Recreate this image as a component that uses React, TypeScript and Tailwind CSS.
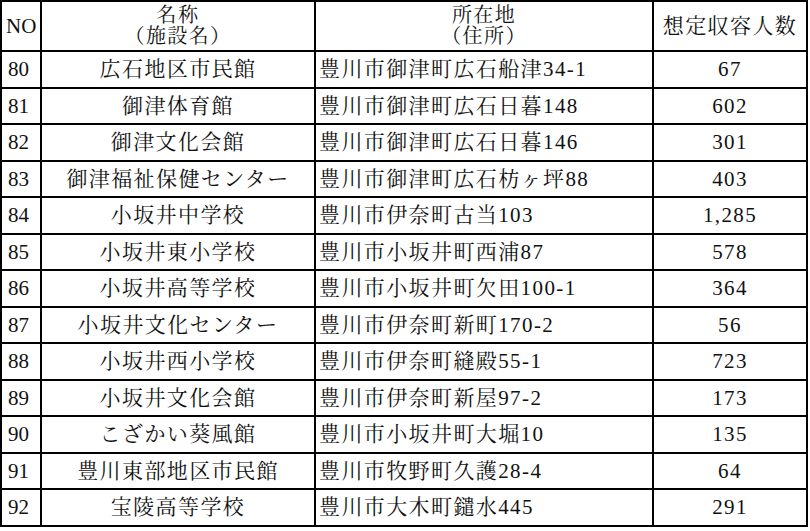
import React from 'react';

const rows = [
  ['80', '広石地区市民館', '豊川市御津町広石船津34-1', '67'],
  ['81', '御津体育館', '豊川市御津町広石日暮148', '602'],
  ['82', '御津文化会館', '豊川市御津町広石日暮146', '301'],
  ['83', '御津福祉保健センター', '豊川市御津町広石枋ヶ坪88', '403'],
  ['84', '小坂井中学校', '豊川市伊奈町古当103', '1,285'],
  ['85', '小坂井東小学校', '豊川市小坂井町西浦87', '578'],
  ['86', '小坂井高等学校', '豊川市小坂井町欠田100-1', '364'],
  ['87', '小坂井文化センター', '豊川市伊奈町新町170-2', '56'],
  ['88', '小坂井西小学校', '豊川市伊奈町縫殿55-1', '723'],
  ['89', '小坂井文化会館', '豊川市伊奈町新屋97-2', '173'],
  ['90', 'こざかい葵風館', '豊川市小坂井町大堀10', '135'],
  ['91', '豊川東部地区市民館', '豊川市牧野町久護28-4', '64'],
  ['92', '宝陵高等学校', '豊川市大木町鑓水445', '291'],
];

const cell = 'border-2 border-black p-0 align-middle';

export default function App() {
  return (
    <div className="w-[810px] h-[531px] bg-white text-[#111] font-['Liberation_Serif','Noto_Serif_CJK_JP','Noto_Sans_CJK_JP',serif] text-[21px] leading-[22px] tracking-[1.4px]">
      <table className="table-fixed border-collapse w-[808px]">
        <colgroup>
          <col className="w-[40px]" />
          <col className="w-[274px]" />
          <col className="w-[338px]" />
          <col className="w-[154px]" />
        </colgroup>
        <thead>
          <tr className="h-[50px]">
            <th className={`${cell} font-normal text-left pl-[4px] tracking-normal`}>NO</th>
            <th className={`${cell} font-normal text-center text-[20px] leading-[21px]`}>
              <div>名称</div>
              <div>（施設名）</div>
            </th>
            <th className={`${cell} font-normal text-center text-[20px] leading-[21px]`}>
              <div>所在地</div>
              <div>（住所）</div>
            </th>
            <th className={`${cell} font-normal text-center`}>想定収容人数</th>
          </tr>
        </thead>
        <tbody>
          {rows.map(([no, name, addr, cap]) => (
            <tr key={no} className="h-[36.5px]">
              <td className={`${cell} pl-[6px] tracking-normal`}>{no}</td>
              <td className={`${cell} text-center`}>{name}</td>
              <td className={`${cell} pl-[3px] whitespace-nowrap`}>{addr}</td>
              <td className={`${cell} text-center`}>{cap}</td>
            </tr>
          ))}
        </tbody>
      </table>
    </div>
  );
}
